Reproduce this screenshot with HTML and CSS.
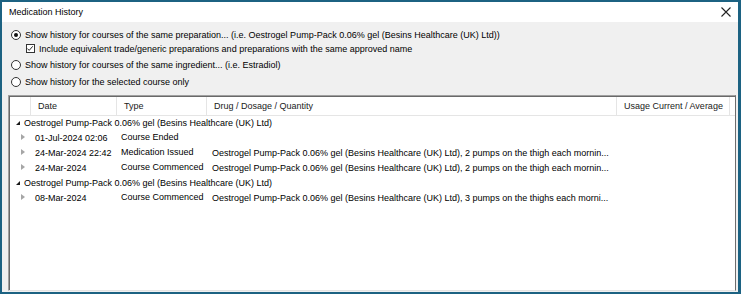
FILE: index.html
```html
<!DOCTYPE html>
<html lang="en">
<head>
    <meta charset="UTF-8">
    <title>Medication History</title>
    <link rel="stylesheet" href="styles.css">
</head>
<body>

    <div class="window">
        <!-- Title bar -->
        <div class="titlebar">
            <span class="title">Medication History</span>
            <svg class="close" width="10" height="10" viewBox="0 0 10 10">
                <path d="M0.5 0.5 L9.5 9.5 M9.5 0.5 L0.5 9.5" stroke="#222" stroke-width="1.1" fill="none"/>
            </svg>
        </div>

        <div class="content">
            <!-- Options -->
            <div class="options">
                <div class="opt opt-1">
                    <span class="radio checked"></span>
                    <span>Show history for courses of the same preparation... (i.e. Oestrogel Pump-Pack 0.06% gel (Besins Healthcare (UK) Ltd))</span>
                </div>
                <div class="opt opt-check">
                    <span class="checkbox">
                        <svg width="9" height="9" viewBox="0 0 9 9"><path d="M1.5 4.5 L3.6 6.6 L7.6 2" stroke="#222" stroke-width="1.1" fill="none"/></svg>
                    </span>
                    <span>Include equivalent trade/generic preparations and preparations with the same approved name</span>
                </div>
                <div class="opt opt-2">
                    <span class="radio"></span>
                    <span>Show history for courses of the same ingredient... (i.e. Estradiol)</span>
                </div>
                <div class="opt opt-3">
                    <span class="radio"></span>
                    <span>Show history for the selected course only</span>
                </div>
            </div>

            <!-- History list -->
            <div class="list">
                <div class="list-head">
                    <div class="hcell"></div>
                    <div class="hcell">Date</div>
                    <div class="hcell">Type</div>
                    <div class="hcell">Drug / Dosage / Quantity</div>
                    <div class="hcell">Usage Current / Average</div>
                    <div class="hcell last"></div>
                </div>

                <div class="group-row"><span class="tri-open"></span>Oestrogel Pump-Pack 0.06% gel (Besins Healthcare (UK) Ltd)</div>
                <div class="row">
                    <div class="cell"><span class="tri-closed"></span></div>
                    <div class="cell date">01-Jul-2024 02:06</div>
                    <div class="cell type">Course Ended</div>
                    <div class="cell drug"></div>
                </div>
                <div class="row">
                    <div class="cell"><span class="tri-closed"></span></div>
                    <div class="cell date">24-Mar-2024 22:42</div>
                    <div class="cell type">Medication Issued</div>
                    <div class="cell drug">Oestrogel Pump-Pack 0.06% gel (Besins Healthcare (UK) Ltd), 2 pumps on the thigh each mornin...</div>
                </div>
                <div class="row">
                    <div class="cell"><span class="tri-closed"></span></div>
                    <div class="cell date">24-Mar-2024</div>
                    <div class="cell type">Course Commenced</div>
                    <div class="cell drug">Oestrogel Pump-Pack 0.06% gel (Besins Healthcare (UK) Ltd), 2 pumps on the thigh each mornin...</div>
                </div>

                <div class="group-row"><span class="tri-open"></span>Oestrogel Pump-Pack 0.06% gel (Besins Healthcare (UK) Ltd)</div>
                <div class="row">
                    <div class="cell"><span class="tri-closed"></span></div>
                    <div class="cell date">08-Mar-2024</div>
                    <div class="cell type">Course Commenced</div>
                    <div class="cell drug">Oestrogel Pump-Pack 0.06% gel (Besins Healthcare (UK) Ltd), 3 pumps on the thighs each morni...</div>
                </div>
            </div>
        </div>
    </div>

</body>
</html>
```

FILE: styles.css
```css
* {
    margin: 0;
    padding: 0;
    box-sizing: border-box;
}
body {
    font-family: "Liberation Sans", Arial, sans-serif;
    font-size: 9px;
    color: #000;
    background: #fff;
}
.window {
    width: 741px;
    height: 294px;
    border-style: solid;
    border-color: #1c6282;
    border-width: 2px 3px 2px 2px;
    display: flex;
    flex-direction: column;
    background: #f0f0f0;
}
.titlebar {
    height: 20px;
    background: #fff;
    display: flex;
    align-items: center;
    justify-content: space-between;
    padding: 0 7px 0 7px;
}
.title {
    font-size: 9px;
}
.close {
    margin-top: -1px;
}
.content {
    flex: 1;
    display: flex;
    flex-direction: column;
    padding: 6px 2px 1px 6px;
    min-height: 0;
}

/* Options */
.opt {
    display: flex;
    align-items: center;
    height: 14px;
    white-space: nowrap;
}
.opt-1 {
    margin-top: 0;
}
.opt-check {
    padding-left: 18px;
    margin-top: -0.5px;
}
.opt-2,
.opt-3 {
    margin-top: 2.5px;
}
.radio {
    width: 10px;
    height: 10px;
    border: 1px solid #333;
    border-radius: 50%;
    background: #fff;
    margin: 0 4px 0 3px;
    display: flex;
    align-items: center;
    justify-content: center;
}
.radio.checked::after {
    content: "";
    width: 4px;
    height: 4px;
    border-radius: 50%;
    background: #111;
}
.checkbox {
    width: 9px;
    height: 9px;
    border: 1px solid #333;
    background: #fff;
    margin-right: 4px;
    display: flex;
}
.checkbox svg {
    margin: -1px 0 0 -1px;
}

/* List */
.list {
    flex: 1;
    margin-top: 6px;
    background: #fff;
    border-top: 1px solid #a0a0a0;
    border-left: 1px solid #a0a0a0;
    border-right: 1px solid #6d6d6d;
    border-bottom: 1px solid #e3e3e3;
    box-shadow: inset 1px 1px 0 #696969;
    padding: 1px 0 0 1px;
    overflow: hidden;
}
.list-head {
    display: grid;
    grid-template-columns: 21px 86px 90px 410px 113px 1fr;
    height: 19px;
    border-bottom: 1px solid #e5e5e5;
}
.hcell {
    border-right: 1px solid #e5e5e5;
    padding-left: 7px;
    line-height: 18px;
    white-space: nowrap;
    color: #1a1a1a;
}
.hcell.last {
    border-right: none;
}
.group-row {
    height: 15px;
    line-height: 15px;
    padding-left: 4px;
    white-space: nowrap;
    display: flex;
    align-items: center;
}
.tri-open {
    width: 0;
    height: 0;
    border-left: 4px solid transparent;
    border-bottom: 4px solid #1a1a1a;
    margin: 0 4px 0 2px;
}
.row {
    display: grid;
    grid-template-columns: 21px 86px 90px 410px;
    height: 15px;
    line-height: 15px;
    white-space: nowrap;
}
.cell {
    overflow: hidden;
}
.cell.date {
    padding-left: 4px;
}
.cell.type {
    padding-left: 4px;
    margin-top: -1px;
}
.cell.drug {
    padding-left: 5px;
}
.tri-closed {
    display: inline-block;
    width: 0;
    height: 0;
    border-top: 3px solid transparent;
    border-bottom: 3px solid transparent;
    border-left: 4px solid #a6a6a6;
    margin-left: 11px;
    vertical-align: middle;
    position: relative;
    top: -1px;
}
```
